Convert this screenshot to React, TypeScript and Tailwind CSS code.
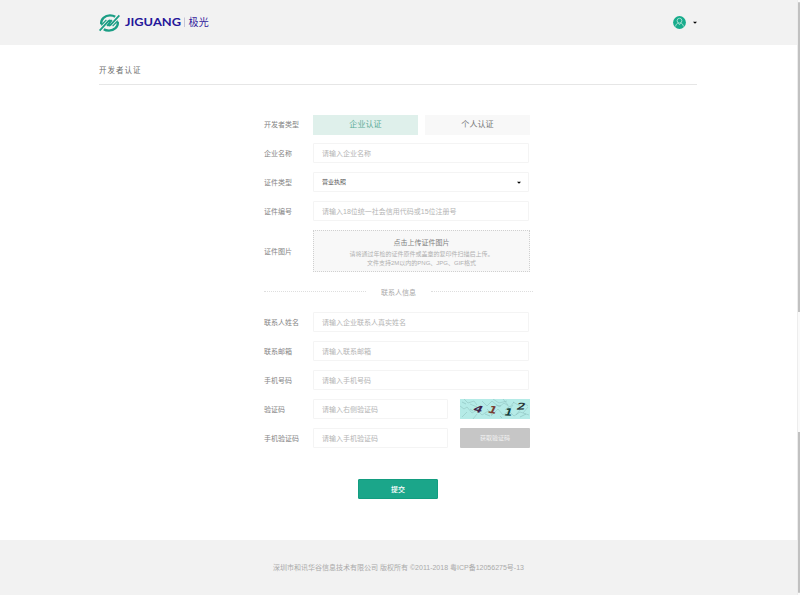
import React from "react";

type FieldProps = { label: string; placeholder: string; children?: React.ReactNode };

function Row({ label, children, className = "h-5" }: { label: string; children: React.ReactNode; className?: string }) {
  return (
    <div className={`flex items-center ${className}`}>
      <div className="w-[49px] shrink-0 whitespace-nowrap pt-px text-[7px] leading-[10px] text-[#858585]">{label}</div>
      {children}
    </div>
  );
}

function Field({ label, placeholder, children }: FieldProps) {
  return (
    <Row label={label}>
      <div
        className={`flex h-5 items-center whitespace-nowrap rounded-[1px] border border-[#f4f4f4] pt-px pl-2 text-[7px] leading-[10px] text-[#b4b4b4] ${
          children ? "w-[135px]" : "w-[216px]"
        }`}
      >
        {placeholder}
      </div>
      {children}
    </Row>
  );
}

function Logo() {
  return (
    <div className="flex h-5 items-center">
      <svg className="h-[18px] w-[21px]" viewBox="0 0 21 18" fill="none">
        <path d="M2.2 10.2C1.6 5 6 1.4 11 1.4c2.2 0 3.9.4 5.2 1.3" stroke="#1b9e85" strokeWidth="2.3" />
        <path d="M18.8 7.8c.6 5.2-3.8 8.8-8.8 8.8-2.2 0-3.9-.4-5.2-1.3" stroke="#1b9e85" strokeWidth="2.3" />
        <path d="M.6 16.6 9.3 7.2q2-1.5 2.1.2 0 .7-3.3 4.4" stroke="#1b9e85" strokeWidth="1.8" />
        <path d="M20.4 1.4 11.7 10.8q-2 1.5-2.1-.2 0-.7 3.3-4.4" stroke="#1b9e85" strokeWidth="1.8" />
        <path d="m2.2 11.2 5.2-5.3M18.8 6.8l-5.2 5.3" stroke="#1b9e85" strokeWidth="1.3" />
      </svg>
      <svg className="mb-[2px] ml-[4px] h-5 w-[86px]" viewBox="0 0 86 20">
        <text x="1" y="14.2" textLength="56" lengthAdjust="spacingAndGlyphs" fontFamily="Lato, sans-serif" fontWeight="700" fontSize="11.8" fill="#25169a">
          JIGUANG
        </text>
        <path d="M60.5 5.5v9.5" stroke="#b9b7cf" strokeWidth=".8" />
        <text x="64.4" y="13.8" textLength="20.4" fontFamily="Noto Sans CJK SC, sans-serif" fontSize="10" fill="#30219c">
          极光
        </text>
      </svg>
    </div>
  );
}

function Captcha() {
  return (
    <svg className="ml-3 h-5 w-[70px] shrink-0" viewBox="0 0 70 20">
      <rect width="70" height="20" fill="#b5ebe7" />
      <g fill="none" stroke="#7caaa8" strokeWidth=".6" opacity=".6">
        <path d="m0 7 4 3 3-2 5 6 5-3 5 5 6-4 4 4M4 0l4 4 6-2 3 4M2 18l5-5M22 2l5 5 5-5 7 6 5-4 6 4 4-5M33 0l6 4 8-2M31 17l7-7 5 6 6-4 5 5 6-4 9 3M53 3l7 4M63 14l5-6M43 0l5 6M13 20l4-5M27 10l5 5M50 10l3-4M10 5l7 3M56 16l4-5" />
      </g>
      <g fill="none" stroke="#5f9190" strokeWidth=".6" opacity=".5">
        <path d="m2 3 4 2M10 10l3 2M25 15l5 2M36 6l5 1M45 11l4-3M60 18l6-3M40 17l2 2M64 4l4 3" />
      </g>
      <g fontFamily="DejaVu Sans Mono, monospace" fontWeight="700" fontStyle="italic">
        <text fontSize="11" fill="#3d2048" transform="translate(13 12.4) rotate(12) scale(1.4 .9)">4</text>
        <text fontSize="11" fill="#793d32" transform="translate(28 13.6) rotate(10) scale(1.3 .92)">1</text>
        <text fontSize="11" fill="#143e3d" transform="translate(44.5 16.6) rotate(3) scale(1.2 .92)">1</text>
        <text fontSize="10" fill="#283436" transform="translate(57 10.8) rotate(-3) scale(1.5 .92)">2</text>
      </g>
    </svg>
  );
}

export default function App() {
  return (
    <div className="flex h-[595px] w-[800px] overflow-hidden bg-white font-['Liberation_Sans','Noto_Sans_CJK_SC',sans-serif]">
      <div className="flex w-[797px] shrink-0 flex-col">
        <header className="flex h-[45px] shrink-0 items-center justify-between bg-[#f2f2f2] pr-[100px] pl-[99px]">
          <Logo />
          <div className="flex items-center gap-[7px]">
            <svg className="size-[13px]" viewBox="0 0 13 13" fill="none">
              <circle cx="6.5" cy="6.5" r="6.4" fill="#18ac8c" />
              <circle cx="6.5" cy="4.7" r="2.4" stroke="#a3ded0" strokeWidth="1" />
              <path d="M2.6 10.4c.3-2 1.2-2.9 2.4-3.3l1.5 1.6L8 7.1c1.2.4 2.1 1.3 2.4 3.3" stroke="#a3ded0" strokeWidth="1" />
            </svg>
            <svg className="h-[3px] w-1" viewBox="0 0 4 3"><path d="M0 .8h4L2 2.8z" fill="#000" /></svg>
          </div>
        </header>

        <main className="flex h-[495px] shrink-0 flex-col">
          <h1 className="mr-[100px] ml-[99px] h-10 border-b border-[#e6e6e6] pt-5 text-[7.5px] leading-3 tracking-[1px] text-[#707070]">
            开发者认证
          </h1>

          <form className="ml-[264px] flex w-[269px] flex-col gap-[9px] pt-[29px]">
            <Row label="开发者类型">
              <div className="flex h-5 w-[217px] items-center gap-[7px] pt-px text-[8.1px] leading-3">
                <div className="flex h-5 w-[105px] items-center justify-center bg-[#dff0eb] pt-px text-[#5cac97]">企业认证</div>
                <div className="flex h-5 w-[105px] items-center justify-center bg-[#f8f8f8] pt-px text-[#777]">个人认证</div>
              </div>
            </Row>
            <Field label="企业名称" placeholder="请输入企业名称" />
            <Row label="证件类型">
              <div className="flex h-5 w-[216px] items-center justify-between rounded-[1px] border border-[#f4f4f4] pr-[7px] pl-2 text-[6px] leading-[10px] text-[#555]">
                营业执照
                <svg className="h-[3px] w-1" viewBox="0 0 4 3"><path d="M0 .8h4L2 2.8z" fill="#000" /></svg>
              </div>
            </Row>
            <Field label="证件编号" placeholder="请输入18位统一社会信用代码或15位注册号" />
            <Row label="证件图片" className="h-[42px]">
              <div className="flex h-[42px] w-[217px] flex-col items-center border border-dotted border-[#d0d0d0] bg-[#f8f8f8] pt-[7px] text-[6px] leading-[9px] whitespace-nowrap text-[#b0b0b0]">
                <div className="mb-[2px] text-[7px] leading-[10px] text-[#808080]">点击上传证件图片</div>
                <div>请将通过年检的证件原件或盖章的复印件扫描后上传。</div>
                <div>文件支持2M以内的PNG、JPG、GIF格式</div>
              </div>
            </Row>
            <div className="mt-[5px] mb-[6px] flex h-[11px] items-center justify-between">
              <div className="w-[102px] border-t border-dotted border-[#dedede]" />
              <span className="pt-[2px] text-[7px] leading-[10px] text-[#aaa]">联系人信息</span>
              <div className="w-[102px] border-t border-dotted border-[#dedede]" />
            </div>
            <Field label="联系人姓名" placeholder="请输入企业联系人真实姓名" />
            <Field label="联系邮箱" placeholder="请输入联系邮箱" />
            <Field label="手机号码" placeholder="请输入手机号码" />
            <Field label="验证码" placeholder="请输入右侧验证码">
              <Captcha />
            </Field>
            <Field label="手机验证码" placeholder="请输入手机验证码">
              <div className="ml-3 flex h-5 w-[70px] shrink-0 items-center justify-center rounded-[1px] bg-[#c6c6c6] text-[6px] leading-[10px] text-[#f2f2f2]">
                获取验证码
              </div>
            </Field>
          </form>

          <button className="mt-[31px] ml-[358px] h-5 w-20 rounded-[1px] border border-[#139d80] bg-[#1ba68a] pt-px text-[7px] leading-[10px] font-medium text-white">
            提交
          </button>
        </main>

        <footer className="flex h-[55px] shrink-0 items-center justify-center bg-[#f2f2f2] text-[7px] leading-[10px] text-[#aaa]">
          深圳市和讯华谷信息技术有限公司 版权所有 ©2011-2018 粤ICP备12056275号-13
        </footer>
      </div>

      <div className="flex w-[3px] shrink-0 flex-col items-end border-l border-[#ededed] bg-[#fafafa] pt-[2px]">
        <div className="h-[310px] w-[2px] rounded-t-[1px] bg-[#c1c1c1]" />
        <div className="mt-[120px] h-[161px] w-[2px] rounded-b-[1px] bg-[#c1c1c1]" />
      </div>
    </div>
  );
}
